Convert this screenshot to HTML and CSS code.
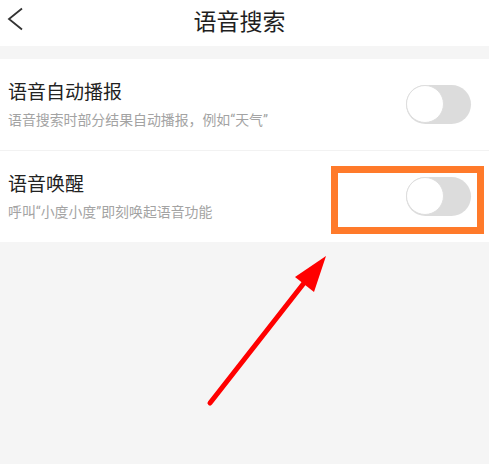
FILE: index.html
```html
<!DOCTYPE html>
<html lang="zh-CN">
<head>
<meta charset="utf-8">
<link rel="stylesheet" href="styles.css">
</head>
<body>
<div class="page">
  <header class="nav">
    <svg class="back" width="20" height="26" viewBox="0 0 20 26"><polyline points="15,1.5 2,12 15,22.5" fill="none" stroke="#333" stroke-width="1.8"/></svg>
    <h1 class="nav-title">语音搜索</h1>
  </header>
  <div class="spacer"></div>
  <section class="list">
    <div class="row">
      <div class="text">
        <div class="title">语音自动播报</div>
        <div class="desc">语音搜索时部分结果自动播报，例如“天气”</div>
      </div>
      <div class="switch"><span class="knob"></span></div>
    </div>
    <div class="row">
      <div class="text">
        <div class="title">语音唤醒</div>
        <div class="desc">呼叫“小度小度”即刻唤起语音功能</div>
      </div>
      <div class="switch"><span class="knob"></span></div>
    </div>
  </section>
  <div class="highlight"></div>
  <svg class="arrow" width="489" height="464" viewBox="0 0 489 464">
    <line x1="210" y1="403" x2="304" y2="283" stroke="#ff0000" stroke-width="5" stroke-linecap="round"/>
    <polygon points="326,256 295,277 314,292" fill="#ff0000"/>
  </svg>
</div>
</body>
</html>
```
FILE: styles.css
```css
html, body {
  margin: 0;
  padding: 0;
  background: #f5f5f5;
}
.page {
  position: relative;
  width: 489px;
  height: 464px;
  overflow: hidden;
  font-family: "Noto Sans CJK SC", "Noto Sans", sans-serif;
}
.nav {
  height: 46px;
  background: #fff;
  display: flex;
  align-items: center;
  justify-content: center;
  position: relative;
}
.back {
  position: absolute;
  left: 7px;
  top: 7px;
}
.nav-title {
  margin: 0;
  font-size: 23px;
  font-weight: 400;
  color: #1e1e1e;
  line-height: 30px;
  margin-top: -6px;
  margin-left: -10px;
}
.spacer {
  height: 13px;
}
.list {
  background: #fff;
}
.row {
  height: 91px;
  display: flex;
  align-items: center;
  justify-content: space-between;
  padding: 0 18px 0 8px;
  box-sizing: border-box;
}
.row + .row {
  border-top: 1px solid #f2f2f2;
  height: 92px;
}
.text {
  display: flex;
  flex-direction: column;
  gap: 7px;
  margin-top: -2px;
}
.title {
  font-size: 19px;
  line-height: 26px;
  color: #222;
}
.desc {
  font-family: "Roboto", "Noto Sans CJK SC", sans-serif;
  font-size: 13.9px;
  line-height: 18px;
  color: #a3a3a3;
}
.switch {
  width: 65px;
  height: 39px;
  border-radius: 20px;
  background: #dcdcdc;
  position: relative;
  flex: none;
}
.knob {
  position: absolute;
  left: 0;
  top: 0;
  width: 36px;
  height: 36px;
  border-radius: 50%;
  background: #fff;
  border: 1.5px solid #dedede;
}
.highlight {
  position: absolute;
  left: 331px;
  top: 166px;
  width: 153px;
  height: 68px;
  box-sizing: border-box;
  border: 7.5px solid #ff7a2a;
}
.arrow {
  position: absolute;
  left: 0;
  top: 0;
}
```
